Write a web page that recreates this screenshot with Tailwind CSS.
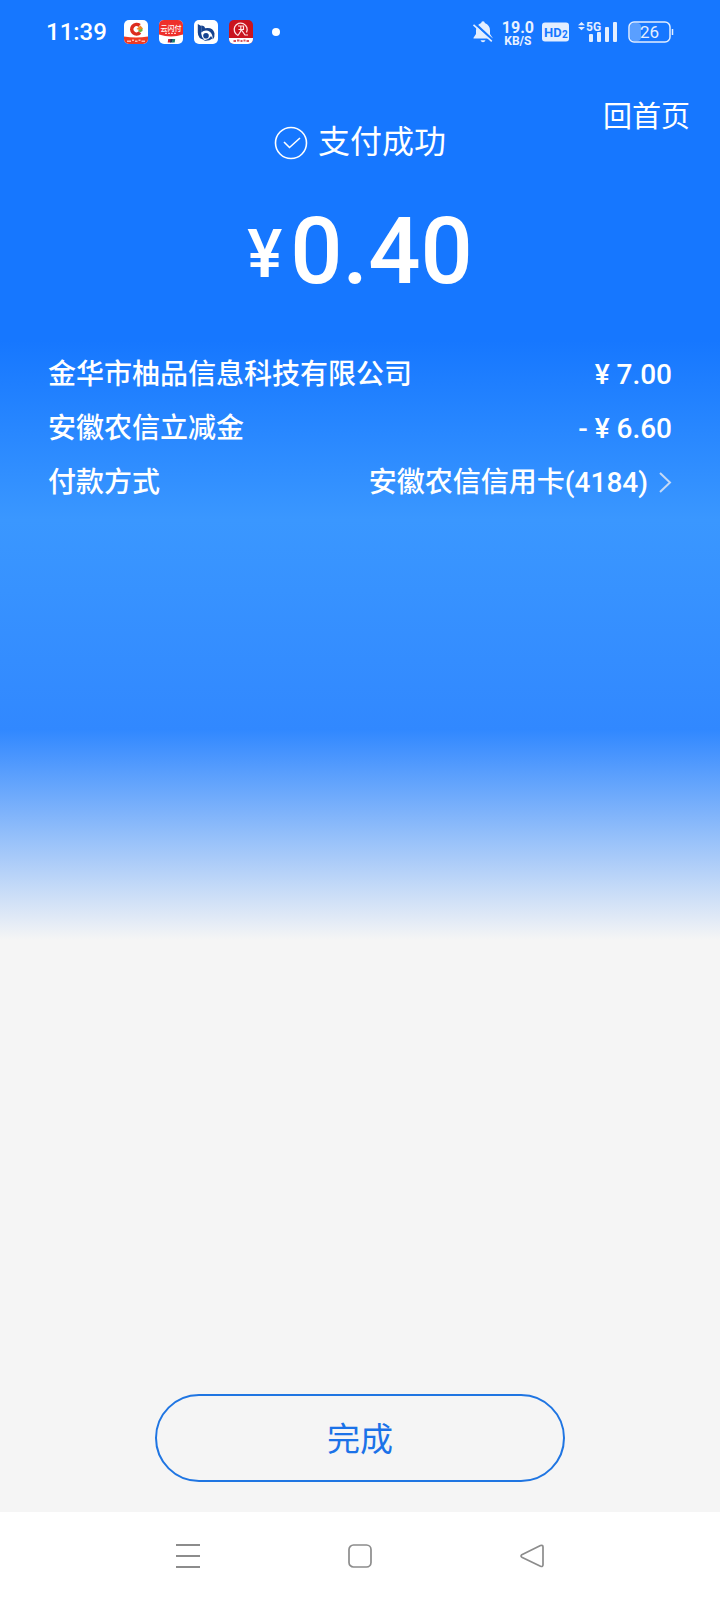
<!DOCTYPE html>
<html lang="zh-CN">
<head>
    <meta charset="UTF-8">
    <meta name="viewport" content="width=device-width, initial-scale=1.0">
    <title>支付成功</title>
    <script src="https://cdn.jsdelivr.net/npm/@tailwindcss/browser@4"></script>
</head>
<body class="min-h-screen flex flex-col bg-[#f5f5f5] bg-[linear-gradient(180deg,#1677ff_340px,#3a97ff_520px,#3188ff_730px,#f5f5f5_940px)] font-['Roboto','Noto_Sans_CJK_SC',sans-serif] text-white">

    <!-- Status bar -->
    <header class="h-16 pl-[46px] pr-[46px] flex items-center justify-between">
        <div class="flex items-center gap-[11px]">
            <span class="text-2xl font-medium mr-1.5">11:39</span>
            <svg class="w-6 h-6" viewBox="0 0 24 24">
                <defs><clipPath id="appA"><rect width="24" height="24" rx="5"/></clipPath></defs>
                <g clip-path="url(#appA)">
                    <rect width="24" height="24" fill="#fff"/>
                    <path d="M0 16.5q12 2 24 0V24H0z" fill="#ee3b24"/>
                    <path d="M15.600 5.500A4.800 4.800 0 1 0 16 12.600" fill="none" stroke="#dc2c1e" stroke-width="3.600"/>
                    <path d="M12.500 9l3.900-3.400L19 8.400l-3.200 1.800z" fill="#f08a24"/>
                    <path d="M14 10.500l4.500-2v2.500l-2.500 1.500z" fill="#6bb53c"/>
                    <path d="M3 21.200h4M8 20.300h2M11 21.200h2.500M14.500 20.300h2M17.500 21.200h3.500" stroke="#ffb8ad" stroke-width="1.500"/>
                </g>
            </svg>
            <svg class="w-6 h-6" viewBox="0 0 24 24">
                <defs><clipPath id="appB"><rect width="24" height="24" rx="5"/></clipPath></defs>
                <g clip-path="url(#appB)">
                    <rect width="24" height="24" fill="#fff"/>
                    <path d="M0 0h24v14.500q-12 4-24 0z" fill="#ee2f2b"/>
                    <text x="12" y="10.500" text-anchor="middle" font-size="7" font-weight="500" fill="#fff">云闪付</text>
                    <path d="M6 13.300h12" stroke="#ffc9c4" stroke-width="1.200" stroke-dasharray="2 1"/>
                    <path d="M9.200 19h3l-.5 3.500H8.700z" fill="#c8202f"/>
                    <path d="M11.500 19h2.500l-.5 3.500H11z" fill="#15345e"/>
                    <path d="M13.700 19h2.500l-.5 3.500h-2.500z" fill="#14806f"/>
                </g>
            </svg>
            <svg class="w-6 h-6" viewBox="0 0 24 24">
                <rect width="24" height="24" rx="5" fill="#fff"/>
                <path d="M3.800 4l3.400 2v7.500q.2 4 3.300 6.500-6.700-1.200-6.700-7.500z" fill="#16438f"/>
                <path d="M7.200 5.500q3.500 0 3.800 2.800 8-1.300 9.500 5 .5 3.500-1.700 6.200.2-6.500-4.800-8.700-3.800-1-6.800 1.700z" fill="#16438f"/>
                <circle cx="12" cy="15.700" r="2.800" fill="#16438f"/>
                <path d="M9.500 20.500q5.500-1 7.500-4.500l1.500 2.500q-3.500 2.800-9 2z" fill="#16438f"/>
            </svg>
            <svg class="w-6 h-6" viewBox="0 0 24 24">
                <defs><clipPath id="appD"><rect width="24" height="24" rx="5"/></clipPath></defs>
                <g clip-path="url(#appD)">
                    <rect width="24" height="24" fill="#c9141e"/>
                    <rect y="18" width="24" height="6" fill="#fff"/>
                    <path d="M9 15.500A6.500 6.500 0 1 1 17.500 12.500" fill="none" stroke="#ffe3e3" stroke-width="1.300"/>
                    <path d="M9 6h5.500v3.500H9.500M11.800 6v5L9 15.500M12.500 10l3.500 5h3" fill="none" stroke="#ffe3e3" stroke-width="1.200"/>
                    <path d="M4.500 21h2.500M8 20.500h2.500M11.500 21h2M14.500 20.500h2M17.500 21h2.500" stroke="#d8535a" stroke-width="1.800"/>
                </g>
            </svg>
            <span class="w-2 h-2 ml-2 rounded-full bg-white"></span>
        </div>

        <div class="flex items-center gap-2 text-[#eaf2ff]">
            <svg class="w-[22px] h-6" viewBox="0 0 22 24" fill="none">
                <path d="M9.200 3a1.800 1.800 0 0 1 3.600 0Q18 5 18 10.500V14l2.500 3.800v.7H1.500v-.7L4 14v-3.500Q4 5 9.200 3z" fill="#e3eeff"/>
                <path d="M8.500 20.300h5q-.8 2-2.500 2t-2.500-2z" fill="#e3eeff"/>
                <path d="M2.500 3.200L20.500 20" stroke="#1677ff" stroke-width="2.400"/>
                <path d="M1.500 4.800L19.800 21.300" stroke="#e3eeff" stroke-width="1.600"/>
            </svg>
            <div class="pt-1 flex flex-col items-center font-bold">
                <span class="text-base leading-[14px]">19.0</span>
                <span class="text-xs leading-3">KB/S</span>
            </div>
            <svg class="w-7 h-5" viewBox="0 0 28 20">
                <rect y=".5" width="27" height="19" rx="3" fill="#e3eeff"/>
                <text x="2" y="15" font-size="13" font-weight="700" fill="#1677ff">HD</text>
                <text x="20" y="16" font-size="10" font-weight="700" fill="#1677ff">2</text>
            </svg>
            <svg class="w-10 h-6" viewBox="0 0 40 24" fill="#e3eeff">
                <path d="M0 5.200L3.500 2 7 5.200zM0 7h7L3.500 10.200z"/>
                <text x="8" y="10.500" font-size="12" font-weight="700">5G</text>
                <rect x="11" y="14" width="4" height="8" rx="1"/>
                <rect x="19" y="12" width="4" height="10" rx="1"/>
                <rect x="27" y="7" width="4" height="15" rx="1"/>
                <rect x="35" y="2" width="4" height="20" rx="1"/>
            </svg>
            <svg class="w-[46px] h-6 ml-0.5" viewBox="0 0 46 24">
                <rect x="2" y="3" width="11" height="18" rx="4" fill="#5a9fff"/>
                <rect x="1" y="2" width="41" height="20" rx="5" fill="none" stroke="#e3eeff" stroke-width="1.500"/>
                <path d="M44.500 9v6" stroke="#e3eeff" stroke-width="1.500"/>
                <text x="21.500" y="18" text-anchor="middle" font-size="17" fill="#e3eeff">26</text>
            </svg>
        </div>
    </header>

    <main class="flex-1 flex flex-col">
        <!-- Result title -->
        <div class="grid grid-cols-3 items-start pt-[34px] px-[30px]">
            <div class="col-start-2 pt-6 flex items-start justify-center gap-2.5">
                <svg class="w-[34px] h-[34px] mt-1" viewBox="0 0 34 34" fill="none" stroke="#fff">
                    <circle cx="17" cy="17" r="15.500" stroke-width="1.600"/>
                    <path d="M10 16l5.500 5.500L26 12" stroke-width="1.600"/>
                </svg>
                <h1 class="text-[32px] leading-10 whitespace-nowrap">支付成功</h1>
            </div>
            <a href="#" class="justify-self-end text-[29px] leading-[38px]">回首页</a>
        </div>

        <p class="mt-10 flex items-start justify-center gap-2 font-medium">
            <span class="text-[66px] leading-[106px]">¥</span>
            <span class="text-[92px] leading-[100px]">0.40</span>
        </p>

        <!-- Payment details -->
        <dl class="mt-10 px-12 text-[28px] leading-[54px] font-medium">
            <div class="flex justify-between">
                <dt>金华市柚品信息科技有限公司</dt>
                <dd>¥ 7.00</dd>
            </div>
            <div class="flex justify-between">
                <dt>安徽农信立减金</dt>
                <dd>- ¥ 6.60</dd>
            </div>
            <div class="flex justify-between">
                <dt>付款方式</dt>
                <dd>
                    <a href="#" class="flex items-center gap-2.5">
                        安徽农信信用卡(4184)
                        <svg class="w-3.5 h-6" viewBox="0 0 14 24" fill="none" stroke="#c4d9f5" stroke-width="2">
                            <path d="M2 2l10 9.500-10 9.500"/>
                        </svg>
                    </a>
                </dd>
            </div>
        </dl>

        <button type="button" class="mt-auto mb-[30px] mx-auto pt-1 w-[57%] h-[88px] rounded-full border-2 border-[#1f75e2] text-[#1b72e8] text-[33px]">完成</button>
    </main>

    <!-- System navigation -->
    <nav class="h-[88px] bg-white flex items-center justify-center gap-[148px]">
        <button type="button" aria-label="最近任务">
            <svg class="w-6 h-6" viewBox="0 0 24 24" stroke="#8c8c8c" stroke-width="2">
                <path d="M0 1h24M0 12h24M0 23h24"/>
            </svg>
        </button>
        <button type="button" aria-label="主屏幕">
            <svg class="w-6 h-6" viewBox="0 0 24 24" fill="none" stroke="#8c8c8c" stroke-width="1.700">
                <rect x="1" y="1" width="22" height="22" rx="4.500"/>
            </svg>
        </button>
        <button type="button" aria-label="返回">
            <svg class="w-6 h-6" viewBox="0 0 24 24" fill="none" stroke="#8c8c8c" stroke-width="1.700" stroke-linejoin="round">
                <path d="M20.500 1.500L1.800 10.700q-1.500 1.200 0 2.500L20.500 22.300q2.500.7 2.500-1.500V3q0-2.300-2.500-1.500z"/>
            </svg>
        </button>
    </nav>
</body>
</html>
